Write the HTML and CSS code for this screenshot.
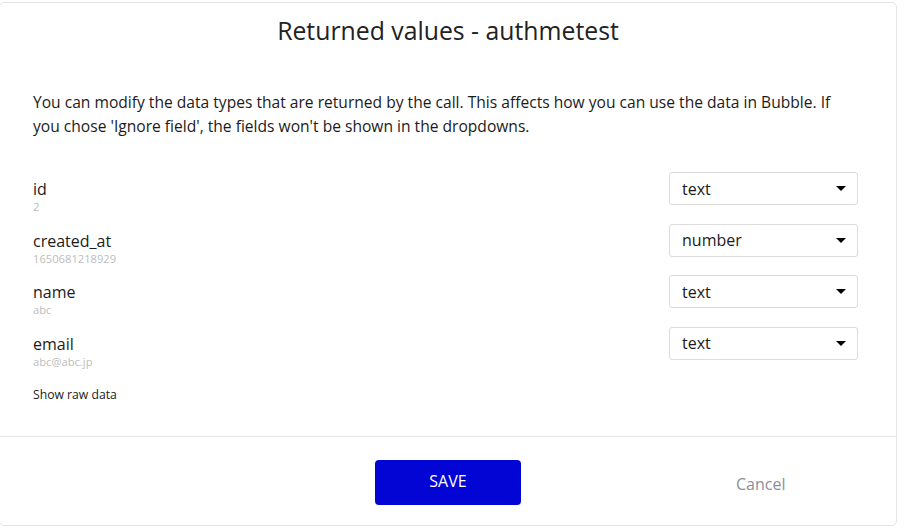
FILE: index.html
```html
<!DOCTYPE html>
<html lang="en">
	<head>
		<meta charset="UTF-8">
		<title>Returned values</title>
		<link rel="stylesheet" href="styles.css">
	</head>
	<body>
		<div class="modal">
			<h1 class="title">Returned values - authmetest</h1>
			<p class="intro">You can modify the data types that are returned by the call. This affects how you can use the data in Bubble. If you chose 'Ignore field', the fields won't be shown in the dropdowns.</p>
			<div class="fields">
				<div class="field">
					<div class="info">
						<div class="name">id</div>
						<div class="sample">2</div>
					</div>
					<div class="dropdown"><span>text</span><i class="caret"></i></div>
				</div>
				<div class="field">
					<div class="info">
						<div class="name">created_at</div>
						<div class="sample">1650681218929</div>
					</div>
					<div class="dropdown"><span>number</span><i class="caret"></i></div>
				</div>
				<div class="field">
					<div class="info">
						<div class="name">name</div>
						<div class="sample">abc</div>
					</div>
					<div class="dropdown"><span>text</span><i class="caret"></i></div>
				</div>
				<div class="field">
					<div class="info">
						<div class="name">email</div>
						<div class="sample">abc@abc.jp</div>
					</div>
					<div class="dropdown"><span>text</span><i class="caret"></i></div>
				</div>
			</div>
			<div class="raw">Show raw data</div>
			<div class="footer">
				<button type="button" class="save">SAVE</button>
				<span class="cancel">Cancel</span>
			</div>
		</div>
	</body>
</html>
```

FILE: styles.css
```css
*{
	margin: 0;
	padding: 0;
	box-sizing: border-box;
}
body{
	width: 912px;
	height: 528px;
	background: #fff;
	font-family: "Open Sans", "Liberation Sans", sans-serif;
	color: #1b1b1b;
	overflow: hidden;
}
.modal{
	width: 898px;
	height: 524px;
	margin: 2px 0 0 -1px;
	border: 1px solid #e6e6e6;
	border-radius: 5px;
	display: flex;
	flex-direction: column;
}
.title{
	font-size: 24.8px;
	font-weight: 400;
	text-align: center;
	line-height: 32px;
	margin-top: 11px;
	color: #222;
}
.intro{
	font-size: 15.6px;
	line-height: 24px;
	padding: 0 38px 0 33px;
	margin-top: 44px;
}
.fields{
	display: flex;
	flex-direction: column;
	gap: 10.67px;
	padding: 0 38px 0 33px;
	margin-top: 34px;
}
.field{
	display: flex;
	justify-content: space-between;
	align-items: flex-start;
}
.name{
	font-size: 16px;
	line-height: 18px;
	margin-top: 8px;
}
.sample{
	font-size: 11.2px;
	line-height: 13px;
	margin-top: 2px;
	color: #bdbdbd;
}
.dropdown{
	width: 189px;
	height: 33px;
	border: 1px solid #dcdcdc;
	border-radius: 3px;
	display: flex;
	align-items: center;
	justify-content: space-between;
	padding: 0 11px 0 12px;
	font-size: 16px;
}
.caret{
	width: 0;
	height: 0;
	border-left: 5px solid transparent;
	border-right: 5px solid transparent;
	border-top: 5px solid #000;
}
.raw{
	font-size: 12.2px;
	line-height: 16px;
	padding-left: 33px;
	margin-top: 19px;
}
.footer{
	margin-top: auto;
	height: 89px;
	border-top: 1px solid #e6e6e6;
	display: flex;
	align-items: flex-start;
	padding: 23px 0 0 375px;
}
.save{
	width: 146px;
	height: 45px;
	border: none;
	border-radius: 4px;
	background: #0205d3;
	color: #fff;
	font-family: inherit;
	font-size: 16px;
	padding-bottom: 3px;
}
.cancel{
	margin: 14px 0 0 215px;
	font-size: 16px;
	line-height: 20px;
	color: #8a8f98;
}
```
